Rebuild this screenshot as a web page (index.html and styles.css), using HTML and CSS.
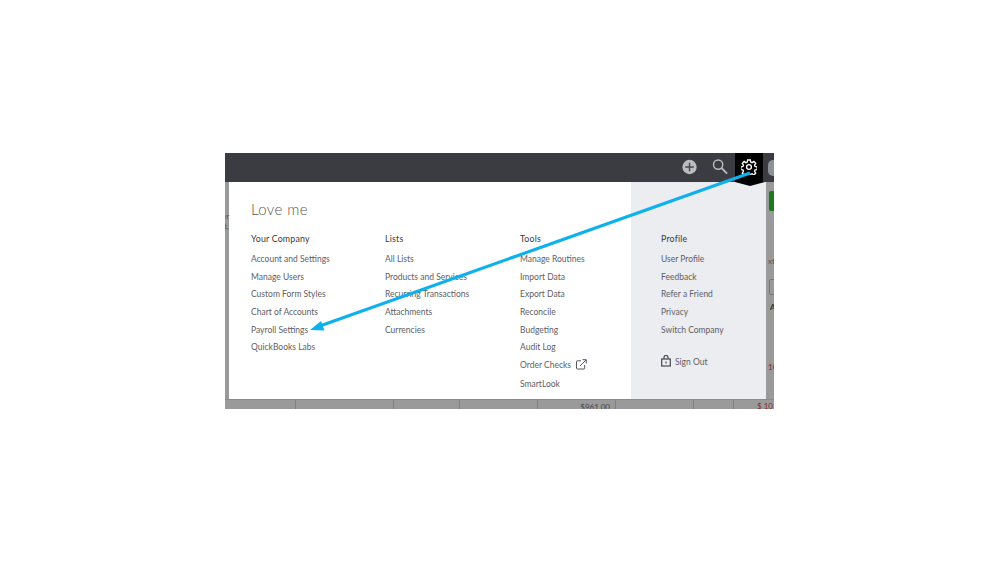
FILE: index.html
```html
<!DOCTYPE html>
<html lang="en">
<head>
  <meta charset="UTF-8" />
  <title>Settings menu</title>
  <link rel="stylesheet" href="styles.css">
</head>
<body>

  <div class="shot">
    <div class="topbar">
      <svg class="icon-plus" width="16" height="16" viewBox="0 0 16 16">
        <circle cx="8" cy="8" r="7.6" fill="#b9bcc2"/>
        <path d="M8 3.5v9M3.5 8h9" stroke="#45464b" stroke-width="1.5"/>
      </svg>
      <svg class="icon-search" width="17" height="17" viewBox="0 0 17 17" fill="none" stroke="#b9bcc2">
        <circle cx="6.5" cy="6.5" r="4.9" stroke-width="1.5"/>
        <path d="M10 10l6 6" stroke-width="2"/>
      </svg>
      <div class="gear-tab">
        <svg width="16" height="16" viewBox="0 0 24 24" fill="none" stroke="#fff" stroke-width="2">
          <circle cx="12" cy="12" r="3.6"/>
          <path d="M10 1.5h4l.6 3.2 2 .8 2.7-1.8 2.8 2.8-1.8 2.700.8 2 3.200.6v4l-3.200.6-.8 2 1.800 2.700-2.800 2.800-2.700-1.800-2 .8-.6 3.200h-4l-.6-3.200-2-.8-2.700 1.800-2.800-2.800 1.800-2.700-.8-2-3.200-.6v-4l3.200-.6.8-2-1.800-2.700 2.800-2.800 2.700 1.800 2-.8z"/>
        </svg>
      </div>
      <span class="avatar"></span>
    </div>

    <div class="backdrop">
      <div class="menu">
        <div class="menu-main">
          <h2 class="company">Love me</h2>
          <div class="columns">
            <div class="col col-company">
              <h3>Your Company</h3>
              <a>Account and Settings</a>
              <a>Manage Users</a>
              <a>Custom Form Styles</a>
              <a>Chart of Accounts</a>
              <a>Payroll Settings</a>
              <a>QuickBooks Labs</a>
            </div>
            <div class="col col-lists">
              <h3>Lists</h3>
              <a>All Lists</a>
              <a>Products and Services</a>
              <a>Recurring Transactions</a>
              <a>Attachments</a>
              <a>Currencies</a>
            </div>
            <div class="col col-tools">
              <h3>Tools</h3>
              <a>Manage Routines</a>
              <a>Import Data</a>
              <a>Export Data</a>
              <a>Reconcile</a>
              <a>Budgeting</a>
              <a>Audit Log</a>
              <a class="with-icon">Order Checks
                <svg width="11" height="11" viewBox="0 0 11 11" fill="none" stroke="#55575c">
                  <path d="M5 1.800H1.200a.7.7 0 0 0-.7.700v6.800a.7.7 0 0 0 .7.7H8a.7.7 0 0 0 .7-.7V6"/>
                  <path d="M4 7l6-6M6.500.700h3.800v3.800"/>
                </svg>
              </a>
              <a class="smartlook">SmartLook</a>
            </div>
          </div>
        </div>
        <div class="menu-side">
          <h3>Profile</h3>
          <a>User Profile</a>
          <a>Feedback</a>
          <a>Refer a Friend</a>
          <a>Privacy</a>
          <a>Switch Company</a>
          <a class="sign-out">
            <svg width="10" height="12" viewBox="0 0 10 12" fill="none" stroke="#44464b" stroke-width="1.200">
              <rect x="0.700" y="4" width="8.600" height="7"/>
              <path d="M3 4V2.400a2 2 0 0 1 4 0V4"/>
              <path d="M5 6.500v2"/>
            </svg>
            Sign Out
          </a>
        </div>
      </div>

      <!-- bits of the dimmed page showing round the menu -->
      <span class="dim-text dim-left-1">er</span>
      <span class="dim-text dim-left-2">t,</span>
      <span class="dim-green"></span>
      <span class="dim-text dim-right-1">xt</span>
      <span class="dim-box"></span>
      <span class="dim-text dim-right-2">AN</span>
      <span class="dim-text dim-right-3">10</span>
    </div>

    <div class="bottom-strip">
      <span class="cell cell-1"></span>
      <span class="cell cell-2"></span>
      <span class="cell cell-3"></span>
      <span class="cell cell-4"></span>
      <span class="cell cell-5"><em class="amount">$961.00</em></span>
      <span class="cell cell-6"></span>
      <span class="cell cell-7"><em class="amount">&nbsp;</em></span>
      <span class="amount-red">$ 10</span>
    </div>

    <svg class="arrow" width="549" height="256" viewBox="0 0 549 256">
      <path d="M525 20L92 174" stroke="#0fb0ee" stroke-width="3.200" fill="none"/>
      <path d="M85 177l11-9 3.500 9.500z" fill="#0fb0ee"/>
    </svg>
  </div>

</body>
</html>
```

FILE: styles.css
```css
body {
  margin: 0;
  background: #fff;
  font-family: Lato, "Open Sans", sans-serif;
}

.shot {
  position: relative;
  width: 549px;
  height: 256px;
  margin: 153px 0 0 225px;
  overflow: hidden;
  background: #9a9a9a;
}

.topbar {
  display: flex;
  align-items: center;
  height: 29px;
  background: #3b3c41;
}

.icon-plus {
  margin-left: 457px;
  margin-top: -1px;
}

.icon-search {
  margin-left: 15px;
  margin-top: -3px;
}

.gear-tab {
  position: relative;
  display: flex;
  justify-content: center;
  padding-top: 6px;
  box-sizing: border-box;
  width: 30px;
  height: 29px;
  margin-left: 7px;
  background: #000;
}

.gear-tab::after {
  content: "";
  position: absolute;
  left: 0;
  top: 29px;
  border-style: solid;
  border-width: 4px 15px 0;
  border-color: #000 transparent transparent;
  z-index: 2;
}

.avatar {
  width: 6px;
  height: 16px;
  margin-left: 5px;
  border-radius: 5px 0 0 5px;
  background: #8f9196;
}

.backdrop {
  position: relative;
  height: 217px;
  padding-left: 4px;
  background: #9a9a9a;
}

.menu {
  display: flex;
  width: 537px;
  height: 217px;
  background: #fff;
  color: #5e6065;
}

.menu-main {
  box-sizing: border-box;
  width: 402px;
  padding: 18px 0 0 22px;
}

.company {
  margin: 0 0 14px;
  font-size: 15px;
  font-weight: 300;
  line-height: 18px;
  letter-spacing: 0.4px;
  color: #5a5650;
}

.columns {
  display: flex;
}

.col-company {
  width: 134px;
}

.col-lists {
  width: 135px;
}

h3 {
  margin: 0 0 8px;
  font-size: 8.800px;
  font-weight: 400;
  line-height: 13px;
  letter-spacing: 0.2px;
  color: #393a3d;
}

.col a,
.menu-side a {
  display: block;
  height: 17.700px;
  font-size: 8.500px;
  line-height: 13px;
  letter-spacing: 0;
}

.with-icon svg {
  margin-left: 3px;
  vertical-align: -2px;
}

.col .with-icon {
  height: 19px;
}

.menu-side {
  flex: 1;
  box-sizing: border-box;
  padding: 50px 0 0 30px;
  background: #ebedf1;
}

.menu-side .sign-out {
  display: flex;
  align-items: center;
  gap: 4px;
  margin-top: 12px;
}

.sign-out svg {
  margin-top: -3px;
}

.bottom-strip {
  display: flex;
  height: 10px;
  border-top: 1px solid #8a8a8a;
  font-size: 8px;
  position: relative;
}

.cell {
  box-sizing: border-box;
  height: 10px;
  border-right: 1px solid #808080;
  text-align: right;
}

.cell-1 { width: 71px; }
.cell-2 { width: 98px; }
.cell-3 { width: 66px; }
.cell-4 { width: 78px; }
.cell-5 { width: 78px; }
.cell-6 { width: 78px; }
.cell-7 { width: 40px; }

.amount {
  position: relative;
  left: -5px;
  top: 2px;
  font-style: normal;
  color: #444;
  line-height: 9px;
  display: none;
}

.cell-5 .amount {
  display: inline;
}

.amount-red {
  position: absolute;
  left: 532px;
  top: 1px;
  color: #8a2a2a;
}

.dim-text {
  position: absolute;
  font-size: 8px;
  line-height: 10px;
  color: #555;
}

.dim-left-1 { left: -3px; top: 29px; }
.dim-left-2 { left: -1px; top: 39px; }
.dim-right-1 { left: 543px; top: 74px; }
.dim-right-2 { left: 545px; top: 120px; font-weight: 700; color: #333; }
.dim-right-3 { left: 543px; top: 180px; color: #8a2a2a; }

.dim-green {
  position: absolute;
  left: 544px;
  top: 9px;
  width: 8px;
  height: 20px;
  border-radius: 2px;
  background: #1d7a1d;
}

.dim-box {
  position: absolute;
  left: 544px;
  top: 97px;
  width: 8px;
  height: 14px;
  border: 1px solid #777;
  border-radius: 2px;
}

.arrow {
  position: absolute;
  left: 0;
  top: 0;
  z-index: 3;
}
```
